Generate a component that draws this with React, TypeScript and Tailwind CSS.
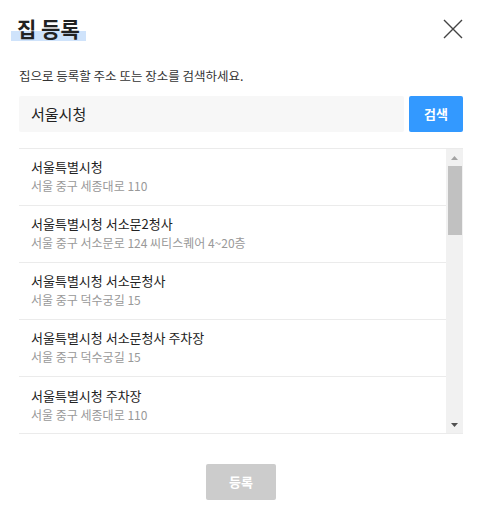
const results = [
  { name: "서울특별시청", address: "서울 중구 세종대로 110" },
  { name: "서울특별시청 서소문2청사", address: "서울 중구 서소문로 124 씨티스퀘어 4~20층" },
  { name: "서울특별시청 서소문청사", address: "서울 중구 덕수궁길 15" },
  { name: "서울특별시청 서소문청사 주차장", address: "서울 중구 덕수궁길 15" },
  { name: "서울특별시청 주차장", address: "서울 중구 세종대로 110" },
];

export default function App() {
  return (
    <div className="h-[510px] w-[482px] bg-white font-['Noto_Sans_CJK_KR',sans-serif] text-[#222]">
      <div className="flex items-start justify-between pl-[11px] pr-[19px] pt-[14px]">
        <h1 className="relative px-[6px] text-[21px] font-bold leading-[28px]">
          <span className="absolute bottom-[1px] left-0 right-0 h-[10px] bg-[#cfe3fb]" />
          <span className="relative">집 등록</span>
        </h1>
        <button className="mt-[5px] flex h-[20px] w-[20px] items-center justify-center">
          <svg width="20" height="20" viewBox="0 0 20 20" fill="none" stroke="#444" strokeWidth="1.4">
            <path d="M1 1L19 19M19 1L1 19" />
          </svg>
        </button>
      </div>

      <p className="mt-[26px] pl-[19px] text-[12.5px] leading-[16px] text-[#333]">
        집으로 등록할 주소 또는 장소를 검색하세요.
      </p>

      <div className="mt-[12px] flex gap-[5px] pl-[19px] pr-[19px]">
        <div className="flex h-[36px] flex-1 items-center rounded-[2px] bg-[#f7f7f7] pl-[12px] text-[15px] text-[#222]">
          서울시청
        </div>
        <button className="h-[36px] w-[54px] rounded-[2px] bg-[#3399ff] text-[13px] font-bold text-white">
          검색
        </button>
      </div>

      <div className="mx-[19px] mt-[16px] flex h-[286px] overflow-hidden border-y border-[#ebebeb]">
        <ul className="flex-1">
          {results.map((r, i) => (
            <li
              key={r.name}
              className={`flex h-[57px] flex-col justify-center pl-[12px] pb-[2px] ${i < results.length - 1 ? "border-b border-[#ebebeb]" : ""}`}
            >
              <span className="text-[13px] leading-[18px] text-[#222]">{r.name}</span>
              <span className="mt-[2px] text-[12px] leading-[16px] text-[#999]">{r.address}</span>
            </li>
          ))}
        </ul>
        <div className="flex w-[17px] flex-col items-center bg-[#f1f1f1]">
          <div className="flex h-[17px] w-full items-center justify-center">
            <svg width="7" height="4" viewBox="0 0 7 4"><path d="M3.5 0L7 4H0z" fill="#a3a3a3" /></svg>
          </div>
          <div className="h-[69px] w-[14px] bg-[#c1c1c1]" />
          <div className="flex-1" />
          <div className="flex h-[17px] w-full items-center justify-center">
            <svg width="7" height="4" viewBox="0 0 7 4"><path d="M0 0H7L3.5 4z" fill="#505050" /></svg>
          </div>
        </div>
      </div>

      <div className="mt-[30px] flex justify-center">
        <button className="h-[36px] w-[70px] rounded-[2px] bg-[#cccccc] text-[13px] font-bold text-white">
          등록
        </button>
      </div>
    </div>
  );
}
